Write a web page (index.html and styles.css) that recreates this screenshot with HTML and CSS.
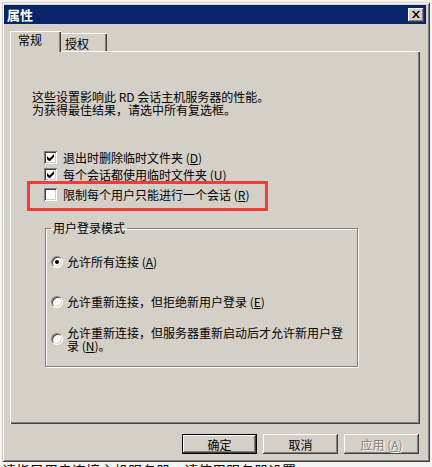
FILE: index.html
```html
<!DOCTYPE html>
<html lang="zh-CN">
<head>
<meta charset="utf-8">
<title>属性</title>
<link rel="stylesheet" href="styles.css">
</head>
<body>
<div class="window">
  <div class="titlebar">
    <span class="title">属性</span>
    <span class="close">
      <svg width="8" height="7" viewBox="0 0 8 7"><path d="M0 0h2l2 2.5L6 0h2L5 3.5 8 7H6L4 4.5 2 7H0l3-3.5z" fill="#000"/></svg>
    </span>
  </div>
  <div class="body">
    <div class="tabs">
      <div class="tab active">常规</div>
      <div class="tab">授权</div>
    </div>
    <div class="panel">
      <p class="intro">这些设置影响此 RD 会话主机服务器的性能。<br>为获得最佳结果，请选中所有复选框。</p>
      <div class="checks">
        <div class="check"><span class="box"><svg width="7" height="7" viewBox="0 0 7 7"><path d="M0 2v3l2 2h1l4-4V0L2.5 4.5z" fill="#000"/></svg></span><span>退出时删除临时文件夹 (<u>D</u>)</span></div>
        <div class="check"><span class="box"><svg width="7" height="7" viewBox="0 0 7 7"><path d="M0 2v3l2 2h1l4-4V0L2.5 4.5z" fill="#000"/></svg></span><span>每个会话都使用临时文件夹 (<u>U</u>)</span></div>
        <div class="check third"><span class="box"></span><span>限制每个用户只能进行一个会话 (<u>R</u>)</span></div>
      </div>
      <fieldset class="group">
        <legend>用户登录模式</legend>
        <div class="radios">
          <div class="radio r1"><span class="dot on"></span><span>允许所有连接 (<u>A</u>)</span></div>
          <div class="radio r2"><span class="dot"></span><span>允许重新连接，但拒绝新用户登录 (<u>E</u>)</span></div>
          <div class="radio r3"><span class="dot"></span><span class="wrap">允许重新连接，但服务器重新启动后才允许新用户登录 (<u>N</u>)。</span></div>
        </div>
      </fieldset>
      <div class="highlight"></div>
    </div>
    <div class="buttons">
      <span class="btn default">确定</span>
      <span class="btn">取消</span>
      <span class="btn disabled">应用 (<u>A</u>)</span>
    </div>
  </div>
</div>
<div class="behind">请指导用户连接主机服务器，请使用服务器设置</div>
</body>
</html>
```
FILE: styles.css
```css
* { box-sizing: border-box; }
html, body { margin: 0; padding: 0; }
body {
  background: #f4f4f4;
  font-family: "Noto Sans CJK SC", "Noto Sans", sans-serif;
  font-size: 12px;
  color: #000;
  overflow: hidden;
  height: 467px;
}
.window {
  margin: 2px 0 0 2px;
  width: 428px;
  height: 460px;
  background: #d4d0c8;
  padding: 3px 4px 2px 2px;
  box-shadow: inset 1px 1px 0 #d4d0c8, inset -1px -1px 0 #404040, inset 2px 2px 0 #fff, inset -2px -2px 0 #808080;
}
.titlebar {
  height: 19px;
  background: #0a246a;
  display: flex;
  align-items: center;
  justify-content: space-between;
  padding: 0 2px 0 3px;
}
.title {
  color: #fff;
  font-weight: bold;
  font-size: 13px;
  line-height: 19px;
}
.close {
  width: 16px;
  height: 14px;
  background: #d4d0c8;
  display: flex;
  align-items: center;
  justify-content: center;
  box-shadow: inset -1px -1px 0 #404040, inset 1px 1px 0 #fff, inset -2px -2px 0 #808080;
}
.body {
  padding: 7px 6px 0 6px;
}
.tabs {
  display: flex;
  align-items: flex-end;
  height: 20px;
}
.tab {
  background: #d4d0c8;
  line-height: 14px;
}
.tab.active {
  width: 51px;
  height: 21px;
  margin-bottom: -1px;
  padding: 2px 0 0 8px;
  position: relative;
  z-index: 1;
  box-shadow: inset 1px 1px 0 #fff, inset -1px 0 0 #404040, inset -2px 0 0 #808080;
}
.tab:not(.active) {
  width: 46px;
  height: 18px;
  padding: 4px 0 0 4px;
  box-shadow: inset 0 1px 0 #fff, inset -1px 0 0 #404040, inset -2px 0 0 #808080;
}
.panel {
  position: relative;
  height: 373px;
  padding: 39px 0 0 22px;
  box-shadow: inset 1px 1px 0 #fff, inset -1px -1px 0 #404040, inset -2px -2px 0 #808080;
}
.intro {
  margin: 0;
  line-height: 13px;
}
.checks {
  margin: 33px 0 0 12px;
}
.check {
  display: flex;
  align-items: center;
  height: 17px;
  line-height: 13px;
}
.check.third { margin-top: 3px; }
.box {
  width: 13px;
  height: 13px;
  margin-right: 6px;
  background: #fff;
  display: flex;
  align-items: center;
  justify-content: center;
  box-shadow: inset 1px 1px 0 #808080, inset -1px -1px 0 #fff, inset 2px 2px 0 #404040, inset -2px -2px 0 #d4d0c8;
}
.group {
  margin: 18px 0 0 13px;
  width: 313px;
  height: 146px;
  padding: 0 5px 0 5px;
  border: 1px solid #808080;
  box-shadow: 1px 1px 0 #fff, inset 1px 1px 0 #fff;
}
.group legend {
  padding: 0 2px;
  line-height: 14px;
  margin-left: 0;
}
.radios { padding-top: 20px; }
.radio {
  display: flex;
  align-items: center;
  line-height: 13px;
}
.radio.r2 { margin-top: 27px; }
.radio.r3 { margin-top: 18px; }
.dot {
  flex: none;
  width: 12px;
  height: 12px;
  margin-right: 4px;
  border-radius: 50%;
  background: #fff;
  border: 1px solid;
  border-color: #808080 #fff #fff #808080;
  box-shadow: inset 1px 1px 0 #404040, inset -1px -1px 0 #d4d0c8;
  display: flex;
  align-items: center;
  justify-content: center;
}
.dot.on::after {
  content: "";
  width: 4px;
  height: 4px;
  border-radius: 50%;
  background: #000;
}
.wrap { width: 280px; }
.highlight {
  position: absolute;
  left: 17px;
  top: 130px;
  width: 241px;
  height: 30px;
  border: 3px solid #f23c3c;
}
.buttons {
  display: flex;
  justify-content: flex-end;
  gap: 6px;
  margin: 10px 1px 0 0;
}
.btn {
  width: 75px;
  height: 20px;
  display: flex;
  align-items: center;
  justify-content: center;
  line-height: 13px;
  background: #d4d0c8;
  box-shadow: inset -1px -1px 0 #404040, inset 1px 1px 0 #fff, inset -2px -2px 0 #808080;
}
.btn.default {
  box-shadow: inset 0 0 0 1px #000, inset -2px -2px 0 #404040, inset 2px 2px 0 #fff, inset -3px -3px 0 #808080;
}
.btn.disabled {
  color: #808080;
  text-shadow: 1px 1px 0 #fff;
}
.behind {
  font-size: 14px;
  line-height: 16px;
  padding-left: 2px;
  margin-top: 0;
}
```
